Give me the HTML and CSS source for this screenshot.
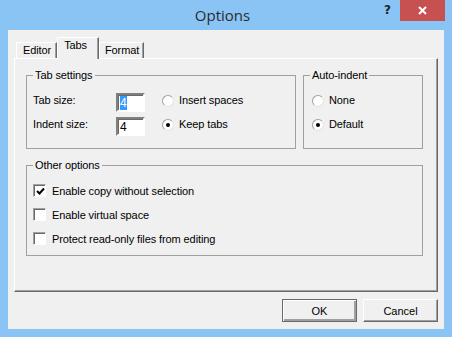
FILE: index.html
```html
<!DOCTYPE html>
<html lang="en">
<head>
  <meta charset="UTF-8">
  <title>Options</title>
  <link rel="stylesheet" href="styles.css">
</head>
<body>

  <div class="window">
    <!-- Title bar -->
    <div class="titlebar">
      <span></span>
      <span class="title">Options</span>
      <div class="caption-buttons">
        <span class="help">?</span>
        <span class="close">
          <svg width="9" height="9" viewBox="0 0 9 9"><path d="M1 1L8 8M8 1L1 8" stroke="#fff" stroke-width="2"/></svg>
        </span>
      </div>
    </div>

    <div class="client">
      <!-- Tabs -->
      <div class="tabs">
        <div class="tab">Editor</div>
        <div class="tab active">Tabs</div>
        <div class="tab last">Format</div>
      </div>

      <div class="panel">
        <div class="top-row">
          <fieldset class="group tab-settings">
            <legend>Tab settings</legend>
            <div class="rows">
              <div class="row">
                <span class="label">Tab size:</span>
                <span class="field"><span class="selected">4</span></span>
                <span class="radio"><span class="circle"></span>Insert spaces</span>
              </div>
              <div class="row">
                <span class="label">Indent size:</span>
                <span class="field">4</span>
                <span class="radio"><span class="circle checked"></span>Keep tabs</span>
              </div>
            </div>
          </fieldset>

          <fieldset class="group auto-indent">
            <legend>Auto-indent</legend>
            <div class="rows">
              <div class="row">
                <span class="radio"><span class="circle"></span>None</span>
              </div>
              <div class="row">
                <span class="radio"><span class="circle checked"></span>Default</span>
              </div>
            </div>
          </fieldset>
        </div>

        <fieldset class="group other">
          <legend>Other options</legend>
          <div class="checks">
            <label class="check">
              <span class="box">
                <svg width="9" height="9" viewBox="0 0 9 9"><path d="M1 4L3.5 6.5L8 1.5" fill="none" stroke="#000" stroke-width="2"/></svg>
              </span>
              Enable copy without selection
            </label>
            <label class="check"><span class="box"></span>Enable virtual space</label>
            <label class="check"><span class="box"></span>Protect read-only files from editing</label>
          </div>
        </fieldset>
      </div>

      <!-- Dialog buttons -->
      <div class="buttons">
        <button class="btn default">OK</button>
        <button class="btn">Cancel</button>
      </div>
    </div>
  </div>

</body>
</html>
```

FILE: styles.css
```css
body {
  margin: 0;
  font-family: 'Liberation Sans', Arial, sans-serif;
  font-size: 11px;
  color: #000;
}

.window {
  width: 452px;
  height: 337px;
  background: #89c4f5;
  display: flex;
  flex-direction: column;
}

.titlebar {
  height: 30px;
  display: grid;
  grid-template-columns: 1fr auto 1fr;
  padding-right: 7px;
}

.title {
  font-family: 'Open Sans', sans-serif;
  font-size: 15px;
  color: #2b2b2b;
  line-height: 30px;
}

.caption-buttons {
  display: flex;
  justify-content: flex-end;
  align-items: flex-start;
  gap: 6px;
}

.help {
  font-family: 'DejaVu Sans', sans-serif;
  font-weight: bold;
  font-size: 12px;
  color: #222;
  line-height: 20px;
  width: 10px;
}

.close {
  width: 45px;
  height: 21px;
  background: #c75050;
  display: flex;
  align-items: center;
  justify-content: center;
}

.client {
  background: #f0f0f0;
  margin: 0 8px 8px 8px;
  flex: 1;
  padding: 8px 6px 7px 6px;
  display: flex;
  flex-direction: column;
  letter-spacing: -0.1px;
}

.tabs {
  display: flex;
  align-items: flex-end;
  height: 20px;
  padding-left: 2px;
}

.tab {
  height: 15px;
  line-height: 14px;
  padding: 0 5px 0 6px;
  border: 1px solid #fff;
  border-bottom: none;
  border-right: 1px solid #696969;
  box-shadow: inset -1px 0 0 #a0a0a0;
}

.tab.active {
  height: 21px;
  line-height: 14px;
  padding: 0 11px 0 6px;
  margin-bottom: -1px;
  background: #f0f0f0;
  position: relative;
  z-index: 1;
}

.tab.last {
  padding: 0 4px 0 5px;
}

.panel {
  height: 234px;
  border: 1px solid #fff;
  border-right-color: #696969;
  border-bottom-color: #696969;
  box-shadow: inset -1px -1px 0 #a0a0a0;
  padding: 10px 0 0 11px;
  box-sizing: border-box;
}

.top-row {
  display: flex;
  gap: 7px;
}

.group {
  margin: 0;
  border: 1px solid #a0a0a0;
  padding: 0 6px;
  box-sizing: border-box;
}

.group legend {
  padding: 0 2px;
  line-height: 13px;
}

.tab-settings {
  width: 270px;
  height: 80px;
}

.auto-indent {
  width: 120px;
  height: 80px;
}

.rows {
  display: flex;
  flex-direction: column;
  gap: 5px;
  padding-top: 11px;
}

.row {
  display: flex;
  height: 19px;
}

.label {
  width: 83px;
  padding-top: 1px;
  line-height: 13px;
}

.field {
  width: 29px;
  height: 19px;
  box-sizing: border-box;
  background: #fff;
  border: 2px solid #fff;
  border-top-color: #808080;
  border-left-color: #808080;
  box-shadow: inset 1px 1px 0 #696969;
  padding: 1px 0 0 2px;
  line-height: 14px;
  font-size: 12px;
  margin-right: 17px;
}

.selected {
  background: #3399ff;
  color: #fff;
}

.radio {
  display: flex;
  align-items: center;
  gap: 5px;
  height: 15px;
  line-height: 13px;
}

.auto-indent .radio {
  margin-left: 2px;
}

.circle {
  width: 12px;
  height: 12px;
  box-sizing: border-box;
  border-radius: 50%;
  background: #fff;
  border: 1px solid #a0a0a0;
  border-right-color: #e3e3e3;
  border-bottom-color: #e3e3e3;
  display: flex;
  align-items: center;
  justify-content: center;
}

.circle.checked::after {
  content: "";
  width: 4px;
  height: 4px;
  border-radius: 50%;
  background: #000;
}

.other {
  width: 397px;
  height: 97px;
  margin-top: 10px;
}

.checks {
  display: flex;
  flex-direction: column;
  gap: 11px;
  padding-top: 12px;
}

.check {
  display: flex;
  align-items: center;
  gap: 6px;
  height: 13px;
}

.box {
  width: 13px;
  height: 13px;
  box-sizing: border-box;
  background: #fff;
  border: 1px solid #fff;
  border-top-color: #a0a0a0;
  border-left-color: #a0a0a0;
  box-shadow: inset 1px 1px 0 #696969;
  display: flex;
  align-items: center;
  justify-content: center;
  padding: 1px 0 0 1px;
}

.buttons {
  display: flex;
  justify-content: flex-end;
  gap: 6px;
  margin-top: 7px;
}

.btn {
  width: 75px;
  height: 23px;
  font-family: 'Liberation Sans', Arial, sans-serif;
  font-size: 11px;
  color: #000;
  background: #f0f0f0;
  border: 1px solid #fff;
  border-right-color: #696969;
  border-bottom-color: #696969;
  box-shadow: inset -1px -1px 0 #a0a0a0;
  padding: 0;
}

.btn.default {
  border: 1px solid #696969;
  box-shadow: inset 1px 1px 0 #fff, inset -2px -2px 0 #a0a0a0;
}
```
